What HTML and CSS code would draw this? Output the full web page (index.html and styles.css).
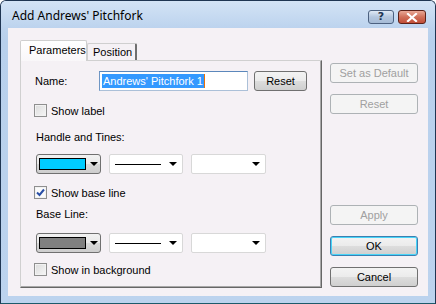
FILE: index.html
```html
<html>
<head>
  <title>Add Andrews' Pitchfork</title>
  <link rel="stylesheet" href="styles.css">
</head>
<body>

<div class="window">
  <!-- caption -->
  <div class="titlebar">
    <span class="title">Add Andrews' Pitchfork</span>
    <div class="caption-btns">
      <span class="cap cap-help">?</span>
      <span class="cap cap-close">
        <svg width="12" height="9" viewBox="0 0 12 9"><path d="M2 1 L10 8 M10 1 L2 8" stroke="#fff" stroke-width="2.2" stroke-linecap="square" fill="none"/></svg>
      </span>
    </div>
  </div>

  <div class="client">
    <div class="tabs-area">
      <div class="tab-strip">
        <div class="tab tab-active">Parameters</div>
        <div class="tab tab-pos">Position</div>
      </div>

      <div class="panel">
        <div class="row row-name">
          <span class="name-label">Name:</span>
          <span class="textbox"><span class="sel">Andrews' Pitchfork 1</span><span class="caret"></span></span>
          <span class="btn btn-small">Reset</span>
        </div>

        <div class="row check-row first-check">
          <span class="check"></span>
          <span class="check-text">Show label</span>
        </div>

        <div class="group-label gl-handle">Handle and Tines:</div>

        <div class="row combo-row">
          <span class="color-combo"><span class="swatch swatch-cyan"></span><span class="arrow"></span></span>
          <span class="combo combo-line"><span class="line"></span><span class="arrow"></span></span>
          <span class="combo combo-width"><span class="arrow"></span></span>
        </div>

        <div class="row check-row">
          <span class="check checked">
            <svg width="9" height="9" viewBox="0 0 9 9"><path d="M1 4.5 L3.5 7 L8 1.5" stroke="#2b4fa6" stroke-width="2" fill="none"/></svg>
          </span>
          <span class="check-text">Show base line</span>
        </div>

        <div class="group-label gl-base">Base Line:</div>

        <div class="row combo-row combo-row2">
          <span class="color-combo"><span class="swatch swatch-gray"></span><span class="arrow"></span></span>
          <span class="combo combo-line"><span class="line"></span><span class="arrow"></span></span>
          <span class="combo combo-width"><span class="arrow"></span></span>
        </div>

        <div class="row check-row last-check">
          <span class="check"></span>
          <span class="check-text">Show in background</span>
        </div>
      </div>
    </div>

    <div class="side-btns">
      <span class="btn btn-side disabled">Set as Default</span>
      <span class="btn btn-side disabled">Reset</span>
      <span class="spacer"></span>
      <span class="btn btn-side disabled">Apply</span>
      <span class="btn btn-side btn-default">OK</span>
      <span class="btn btn-side">Cancel</span>
    </div>
  </div>
</div>

</body>
</html>
```

FILE: styles.css
```css
/* page */
body {
  margin: 0;
  font-family: 'Liberation Sans', Arial, sans-serif;
  font-size: 11px;
  color: #000000;
}

/* window frame */
.window {
  width: 436px;
  height: 304px;
  box-sizing: border-box;
  border: 1px solid #1f3552;
  border-bottom-color: #1d5a6a;
  border-radius: 6px 6px 0 0;
  background: linear-gradient(#c4d8f0, #b8d0ec 40px, #bcd3ee);
  display: flex;
  flex-direction: column;
  overflow: hidden;
}

.titlebar {
  height: 27px;
  display: flex;
  align-items: flex-start;
  justify-content: space-between;
  background: linear-gradient(#d3e3f5, #bcd3ee);
}

.title {
  font-family: 'Noto Sans', sans-serif;
  font-size: 12px;
  color: #000000;
  padding: 6px 0 0 11px;
}

.caption-btns {
  display: flex;
  gap: 4px;
  margin: 9px 9px 0 0;
}

.cap {
  height: 14px;
  box-sizing: border-box;
  border: 1px solid #4c6180;
  border-radius: 3px;
  display: flex;
  align-items: center;
  justify-content: center;
}

.cap-help {
  width: 26px;
  background: linear-gradient(#dfe9f5, #b3c6de 50%, #a6bbd6);
  color: #213452;
  font-family: 'DejaVu Sans', sans-serif;
  font-weight: bold;
  font-size: 11px;
  line-height: 12px;
}

.cap-close {
  width: 28px;
  border-color: #5b2118;
  background: linear-gradient(#e9a896, #d0705a 50%, #c14e38);
}

/* client area */
.client {
  flex: 1;
  margin: 0 7px 7px 7px;
  background-color: #f5f1f5;
  display: flex;
}

.tabs-area {
  margin: 12px 0 0 12px;
}

.tab-strip {
  display: flex;
  align-items: flex-end;
  height: 20px;
}

.tab {
  height: 17px;
  box-sizing: border-box;
  padding: 1px 5px 0 5px;
  border: 1px solid #cfcfcf;
  border-bottom: none;
  border-right: 2px solid #6f6f6f;
  border-radius: 2px 2px 0 0;
  background-color: #f5f1f5;
  line-height: 15px;
}

.tab-pos {
  width: 50px;
  padding: 1px 0 0 5px;
}

.tab-active {
  height: 21px;
  margin-bottom: -1px;
  width: 67px;
  padding: 2px 0 0 8px;
  border-right: 1px solid #cfcfcf;
  background: linear-gradient(#ffffff, #f9f7f9);
  position: relative;
  z-index: 1;
}

.panel {
  width: 302px;
  height: 228px;
  box-sizing: border-box;
  border: 1px solid #d0d0d0;
  border-right: 1px solid #666666;
  border-bottom: 1px solid #666666;
  box-shadow: inset -1px -1px 0 #a8a8a8;
  background-color: #f5f1f5;
  padding: 10px 0 0 13px;
}

/* rows */
.row {
  display: flex;
  align-items: center;
}

.row-name {
  height: 20px;
}

.name-label {
  width: 64px;
  padding-left: 1px;
}

.textbox {
  width: 149px;
  height: 20px;
  box-sizing: border-box;
  border: 1px solid #abc0d8;
  border-top-color: #5b87bb;
  border-left-color: #6f96c4;
  background-color: #ffffff;
  display: flex;
  align-items: center;
  padding-left: 2px;
}

.sel {
  background-color: #3399ff;
  color: #ffffff;
  line-height: 14px;
  padding: 0 1px;
}

.caret {
  width: 1px;
  height: 14px;
  background-color: #e8700a;
}

.btn {
  box-sizing: border-box;
  height: 20px;
  border: 1px solid #707070;
  border-radius: 3px;
  background: linear-gradient(#f3f3f3, #ebebeb 50%, #dddddd 51%, #cfcfcf);
  display: flex;
  align-items: center;
  justify-content: center;
}

.btn-small {
  width: 53px;
  margin-left: 6px;
}

.check-row {
  height: 13px;
  margin-top: 12px;
}

.check {
  width: 13px;
  height: 13px;
  box-sizing: border-box;
  border: 1px solid #8f8f8f;
  background: linear-gradient(135deg, #dcdcdc, #f6f6f6);
  box-shadow: inset 0 0 0 1px #f2f2f2;
  display: flex;
  align-items: center;
  justify-content: center;
}

.check.checked {
  background: #fbfbfb;
}

.check-text {
  margin-left: 4px;
}

.group-label {
  height: 13px;
  line-height: 13px;
  padding-left: 2px;
}

.gl-handle {
  margin-top: 14px;
}

.gl-base {
  margin-top: 9px;
}

.first-check {
  margin-top: 13px;
}

.combo-row {
  height: 20px;
  margin-top: 10px;
  padding-left: 2px;
  gap: 8px;
}

.combo-row2 {
  margin-top: 12px;
}

.last-check {
  margin-top: 10px;
}

.color-combo {
  width: 65px;
  height: 20px;
  box-sizing: border-box;
  border: 1px solid #707070;
  border-radius: 3px;
  background: linear-gradient(#f2f2f2, #e9e9e9 50%, #d9d9d9 51%, #cdcdcd);
  display: flex;
  align-items: center;
  padding-left: 2px;
}

.swatch {
  width: 47px;
  height: 12px;
  box-sizing: border-box;
  border: 1px solid #000000;
}

.swatch-cyan {
  background-color: #00ccff;
}

.swatch-gray {
  background-color: #808080;
}

.arrow {
  width: 0;
  height: 0;
  border-left: 4px solid transparent;
  border-right: 4px solid transparent;
  border-top: 4px solid #000000;
  margin-left: 4px;
}

.combo {
  height: 20px;
  box-sizing: border-box;
  border: 1px solid #d8d8d8;
  border-radius: 2px;
  background-color: #ffffff;
  display: flex;
  align-items: center;
  justify-content: flex-end;
  padding-right: 5px;
}

.combo-line {
  width: 74px;
  justify-content: space-between;
  padding-left: 5px;
}

.combo-width {
  width: 75px;
}

.line {
  width: 46px;
  height: 1px;
  background-color: #000000;
}

/* side buttons */
.side-btns {
  display: flex;
  flex-direction: column;
  margin: 35px 0 0 8px;
  width: 88px;
  height: 224px;
}

.btn-side {
  width: 88px;
  margin-bottom: 11px;
}

.btn-side:last-child {
  margin-bottom: 0;
}

.spacer {
  flex: 1;
}

.disabled {
  border-color: #adb2b5;
  background: #f4f4f4;
  color: #a0a0a0;
}

.btn-default {
  border-color: #3c7fb1;
  box-shadow: inset 0 0 0 1px #48d4f8;
}
```
